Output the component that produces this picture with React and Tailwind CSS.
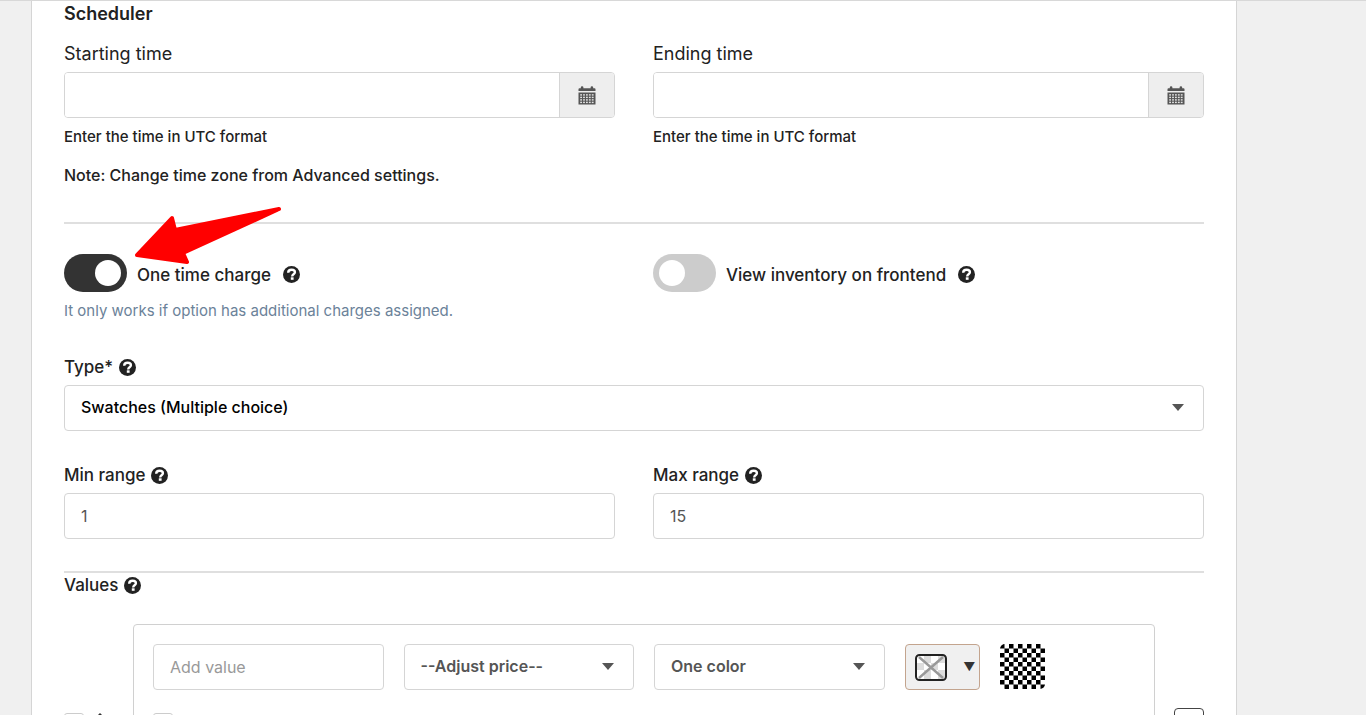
import React from "react";

const inputStyle =
    "h-[46px] w-full rounded-[4px] border border-[#d5d5d5] bg-white px-4 text-base text-[#555] outline-none placeholder:text-[#999]";

const colorModes = ["One color", "Two colors", "Image"];

const HelpIcon = () => (
    <svg viewBox="0 0 17 17" className="size-[17px] shrink-0" aria-hidden="true">
        <circle cx="8.5" cy="8.5" r="8.5" fill="#222" />
        <path
            d="M5.2 6.7C5.2 4.6 6.6 3.7 8.6 3.7c2 0 3.3 1 3.3 2.5 0 2.2-2.7 2-2.7 4.2"
            fill="none"
            stroke="#fff"
            strokeWidth="2.4"
        />
        <rect x="7.8" y="11.3" width="2.8" height="2.5" fill="#fff" />
    </svg>
);

const CalendarIcon = () => (
    <svg viewBox="0 0 18 19" className="h-[19px] w-[18px]" aria-hidden="true">
        <path
            d="M.5 5V3.2a1 1 0 0 1 1-1h1.300V1.500a1 1 0 0 1 2.600 0v.7h7.200V1.500a1 1 0 0 1 2.600 0v.7h1.300a1 1 0 0 1 1 1V5z"
            fill="#555"
        />
        <path d="M.5 6.400h17v12.100H.5z" fill="#555" />
        {[8.2, 10.7, 13.2, 15.7].map((y) =>
            [2.2, 5.1, 8, 10.9, 13.8].map((x) => (
                <rect key={`${x}-${y}`} x={x} y={y} width="1.8" height="1.4" fill="#e4e4e4" />
            ))
        )}
    </svg>
);

const Divider = () => <hr className="h-0.5 border-0 bg-[#dfdfdf]" />;

const FieldLabel = ({ htmlFor, children }) => (
    <div className="mb-1.5 flex items-center gap-1.5 font-medium">
        <label htmlFor={htmlFor}>{children}</label>
        <HelpIcon />
    </div>
);

const DateField = ({ id, label }) => (
    <div>
        <label htmlFor={id} className="mb-1.5 block text-lg/6">
            {label}
        </label>
        <div className="flex h-[46px] overflow-hidden rounded-[4px] border border-[#d5d5d5]">
            <input id={id} type="text" className="min-w-0 flex-1 bg-white px-4 text-base outline-none" />
            <button
                type="button"
                aria-label={`Pick ${label}`}
                className="flex w-[55px] items-center justify-center border-l border-[#d5d5d5] bg-[#eee]"
            >
                <CalendarIcon />
            </button>
        </div>
        <p className="mt-[7px] text-[15px]/6 font-medium">Enter the time in UTC format</p>
    </div>
);

const Toggle = ({ id, label, checked }) => (
    <div className="flex items-center">
        <input
            id={id}
            type="checkbox"
            defaultChecked={checked}
            className="h-[38px] w-[63px] shrink-0 appearance-none rounded-full bg-[#ccc] p-1.5 before:block before:size-[26px] before:rounded-full before:bg-white checked:bg-[#333] checked:pl-[31px]"
        />
        <div className="flex items-center gap-3 pt-[3px] pl-2.5 font-medium">
            <label htmlFor={id}>{label}</label>
            <HelpIcon />
        </div>
    </div>
);

const Select = ({ id, label, options, className }) => (
    <div className="relative">
        <select
            id={id}
            aria-label={label}
            className={`h-[46px] w-full appearance-none rounded-[4px] border border-[#d5d5d5] bg-white pr-12 pb-[3px] pl-4 text-base outline-none ${className}`}
        >
            {options.map((option) => (
                <option key={option}>{option}</option>
            ))}
        </select>
        <svg
            viewBox="0 0 12 7"
            className="pointer-events-none absolute top-[19px] right-5 h-[7px] w-3"
            aria-hidden="true"
        >
            <path d="M0 0h12L6 7z" fill="#555" />
        </svg>
    </div>
);

const ColorPicker = () => (
    <button
        type="button"
        aria-label="Choose color"
        className="flex h-[46px] w-[75px] items-center justify-between rounded-[4px] border border-[#c3a48e] bg-[#f0f0f0] pr-[3px] pl-[9px] text-[#333]"
    >
        <svg viewBox="0 0 32 27" className="h-[27px] w-8" aria-hidden="true">
            <rect x="1" y="1" width="30" height="25" rx="3.5" fill="#fff" />
            <path d="M9 2h7v7H9zM23 2h7v7h-7zM2 9h7v7H2zM16 9h7v7h-7zM9 16h7v9H9zM23 16h7v9h-7z" fill="#ddd" />
            <path d="M4 3l24 21M28 3L4 24" stroke="#999" strokeWidth="2.4" />
            <rect x="1" y="1" width="30" height="25" rx="3.5" fill="none" stroke="#222" strokeWidth="2" />
        </svg>
        <span className="text-xs">▼</span>
    </button>
);

const CheckerSwatch = () => (
    <svg viewBox="0 0 45 45" className="size-[45px]" aria-hidden="true">
        <defs>
            <pattern id="checker" width="9" height="9" patternUnits="userSpaceOnUse">
                <rect width="9" height="9" fill="#fff" />
                <path d="M0 0h4.500v4.500H0zM4.500 4.500H9V9H4.500z" fill="#000" />
            </pattern>
        </defs>
        <rect width="45" height="45" rx="5" fill="url(#checker)" />
    </svg>
);

// red pointer lying over the divider and the first toggle
const Arrow = () => (
    <svg
        viewBox="0 0 148 58"
        className="pointer-events-none absolute top-[-48px] left-[70px] h-[58px] w-[148px]"
        aria-hidden="true"
    >
        <path
            d="M3 49 38 12l3 12L145 3 49 47l4 9z"
            fill="#f00"
            stroke="#f00"
            strokeWidth="4"
            strokeLinejoin="round"
        />
    </svg>
);

const App = () => {
    return (
        <main className="h-screen overflow-hidden border-t border-[#d8d8d8] bg-[#f0f0f0] font-[Inter,sans-serif] text-[17px]/6 text-[#222]">
            <form className="mr-[129px] ml-[31px] border-x border-[#d5d5d5] bg-white px-8 pt-px">
                <h2 className="mb-4 text-lg/6 font-semibold">Scheduler</h2>
                <div className="grid grid-cols-2 gap-[38px]">
                    <DateField id="start" label="Starting time" />
                    <DateField id="end" label="Ending time" />
                </div>
                <p className="mt-3.5 mb-[35px] text-base/6 font-medium">
                    Note: Change time zone from Advanced settings.
                </p>

                <Divider />
                <div className="relative mt-[30px] grid grid-cols-2 items-start gap-[38px]">
                    <div>
                        <Toggle id="one-time" label="One time charge" checked />
                        <p className="mt-[7px] text-[15px]/6 text-[#6b8299]">
                            It only works if option has additional charges assigned.
                        </p>
                    </div>
                    <Toggle id="inventory" label="View inventory on frontend" />
                    <Arrow />
                </div>

                <div className="mt-8">
                    <FieldLabel htmlFor="type">Type*</FieldLabel>
                    <Select
                        id="type"
                        options={["Swatches (Multiple choice)"]}
                        className="font-medium text-black"
                    />
                </div>

                <div className="my-8 grid grid-cols-2 gap-[38px]">
                    <div>
                        <FieldLabel htmlFor="min">Min range</FieldLabel>
                        <input id="min" type="text" defaultValue="1" className={inputStyle} />
                    </div>
                    <div>
                        <FieldLabel htmlFor="max">Max range</FieldLabel>
                        <input id="max" type="text" defaultValue="15" className={inputStyle} />
                    </div>
                </div>

                <Divider />
                <div className="flex items-center gap-1.5 font-medium">
                    <h3>Values</h3>
                    <HelpIcon />
                </div>

                <div className="mt-[27px] flex items-center">
                    <div className="flex w-[69px] shrink-0 items-center gap-1.5">
                        <input
                            type="checkbox"
                            aria-label="Select value"
                            className="size-5 appearance-none rounded-[3px] border border-[#ccc]"
                        />
                        <svg viewBox="0 0 20 20" className="size-5" aria-hidden="true">
                            <path
                                d="M10 0l4 4h-3v5h5V6l4 4-4 4v-3h-5v5h3l-4 4-4-4h3v-5H4v3l-4-4 4-4v3h5V4H6z"
                                fill="#333"
                            />
                        </svg>
                    </div>
                    <div className="h-[198px] flex-1 rounded-[4px] border border-[#d0d0d0] p-[19px]">
                        <div className="grid grid-cols-4 gap-5">
                            <input type="text" placeholder="Add value" aria-label="Value" className={inputStyle} />
                            <Select
                                id="price"
                                label="Price"
                                options={["--Adjust price--"]}
                                className="font-semibold text-[#555]"
                            />
                            <Select
                                id="color"
                                label="Color mode"
                                options={colorModes}
                                className="font-semibold text-[#555]"
                            />
                            <div className="flex gap-5">
                                <ColorPicker />
                                <CheckerSwatch />
                            </div>
                        </div>
                        <input
                            type="checkbox"
                            aria-label="Default value"
                            className="mt-[23px] size-5 appearance-none rounded-[3px] border border-[#ccc]"
                        />
                    </div>
                    <button
                        type="button"
                        aria-label="Remove value"
                        className="ml-[19px] size-[30px] rounded-[4px] border border-[#444] bg-white"
                    />
                </div>
            </form>
        </main>
    );
};

export default App;
